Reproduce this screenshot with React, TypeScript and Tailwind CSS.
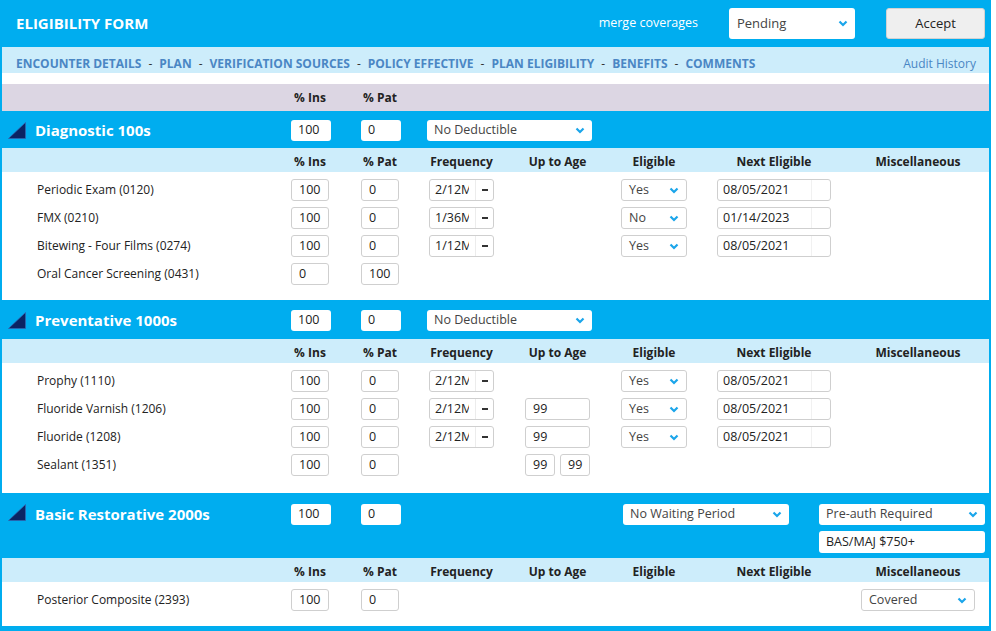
import React from 'react'

type Row = {
  name: string
  ins: string
  pat: string
  freq?: string
  age?: string | [string, string]
  elig?: string
  next?: string
  misc?: string
}

const GRID = 'grid grid-cols-[289px_70px_68px_96px_96px_96px_144px_128px]'

function Chevron() {
  return (
    <svg width="10" height="7" viewBox="0 0 10 7" className="shrink-0">
      <polyline points="1.5,1.5 5,5 8.5,1.5" fill="none" stroke="#1aa5ea" strokeWidth="2.2" />
    </svg>
  )
}

function Triangle() {
  return (
    <svg width="18" height="17" viewBox="0 0 18 17" className="shrink-0">
      <polygon points="17.5,0.5 17.5,16.5 0.5,16.5" fill="#0b2463" stroke="#3463b0" strokeWidth="0.7" />
    </svg>
  )
}

function Select({ value, className = '' }: { value: string; className?: string }) {
  return (
    <div className={`flex items-center justify-between bg-white rounded-[3px] pl-[7px] pr-[7px] text-[#444] ${className}`}>
      <span className="whitespace-nowrap">{value}</span>
      <Chevron />
    </div>
  )
}

function Box({ value, className = '' }: { value: string; className?: string }) {
  return (
    <div className={`flex items-center bg-white rounded-[3px] pl-[7px] text-[#222] ${className}`}>
      {value}
    </div>
  )
}

const bordered = 'border border-[#cfcfcf] text-[12.5px]'

function Section({
  title,
  ins,
  pat,
  rows,
  tall,
  headerH = 'h-[37px]',
  bodyPb = 'pb-[12px]',
}: {
  title: string
  ins: string
  pat: string
  rows: Row[]
  tall?: boolean
  headerH?: string
  bodyPb?: string
}) {
  return (
    <div>
      {/* cabecera de la sección */}
      {tall ? (
        <div className={`${GRID} bg-[#00adef] h-[65px] pt-[11px]`}>
          <div className="flex items-start gap-[9px] pl-[6px] h-[22px]">
            <Triangle />
            <span className="text-white font-bold text-[15px] leading-[20px]">{title}</span>
          </div>
          <div><Box value={ins} className="w-[40px] h-[21px] text-[12.5px]" /></div>
          <div><Box value={pat} className="w-[40px] h-[21px] text-[12.5px]" /></div>
          <div />
          <div />
          <div className="col-span-3 flex flex-col gap-[6px] pr-[4px]">
            <div className="flex justify-between">
              <Select value="No Waiting Period" className="ml-[2px] w-[166px] h-[21px] text-[12.5px]" />
              <Select value="Pre-auth Required" className="w-[166px] h-[21px] text-[12.5px]" />
            </div>
            <Box value="BAS/MAJ $750+" className="self-end w-[166px] h-[22px] text-[12.5px]" />
          </div>
        </div>
      ) : (
        <div className={`${GRID} bg-[#00adef] ${headerH} items-center pt-[2px]`}>
          <div className="flex items-center gap-[9px] pl-[6px]">
            <Triangle />
            <span className="text-white font-bold text-[15px]">{title}</span>
          </div>
          <div><Box value={ins} className="w-[40px] h-[21px] text-[12.5px]" /></div>
          <div><Box value={pat} className="w-[40px] h-[21px] text-[12.5px]" /></div>
          <div className="col-span-3">
            <Select value="No Deductible" className="-ml-[2px] w-[165px] h-[21px] text-[12.5px]" />
          </div>
        </div>
      )}

      {/* encabezados de columnas */}
      <div className={`${GRID} bg-[#cdedfb] h-[24px] pt-[3px] items-center font-bold text-[#222]`}>
        <div />
        <div className="w-[38px] text-center whitespace-nowrap">% Ins</div>
        <div className="w-[38px] text-center whitespace-nowrap">% Pat</div>
        <div className="w-[65px] text-center">Frequency</div>
        <div className="w-[65px] text-center whitespace-nowrap">Up to Age</div>
        <div className="w-[66px] text-center">Eligible</div>
        <div className="w-[114px] text-center whitespace-nowrap">Next Eligible</div>
        <div className="w-[114px] text-center">Miscellaneous</div>
      </div>

      {/* filas */}
      <div className={`bg-white pt-[4px] ${bodyPb}`}>
        {rows.map((r) => (
          <div key={r.name} className={`${GRID} h-[28px] items-center`}>
            <div className="pl-[35px] text-[#222]">{r.name}</div>
            <div><Box value={r.ins} className={`${bordered} w-[38px] h-[22px] pl-[6px]`} /></div>
            <div><Box value={r.pat} className={`${bordered} w-[38px] h-[22px] pl-[6px]`} /></div>
            <div>
              {r.freq && (
                <div className={`${bordered} flex w-[65px] h-[22px] rounded-[3px] bg-white`}>
                  <div className="w-[45px] pl-[5px]">
                    <div className="w-[34px] overflow-hidden whitespace-nowrap leading-[20px] text-[#222]">
                      {r.freq}
                    </div>
                  </div>
                  <div className="flex-1 border-l border-[#ececec] flex items-center justify-center">
                    <span className="block w-[6px] h-[2px] bg-[#333]" />
                  </div>
                </div>
              )}
            </div>
            <div>
              {typeof r.age === 'string' && (
                <Box value={r.age} className={`${bordered} w-[65px] h-[22px] pl-[6px]`} />
              )}
              {Array.isArray(r.age) && (
                <div className="flex gap-[5px]">
                  <Box value={r.age[0]} className={`${bordered} w-[30px] h-[22px] pl-[6px]`} />
                  <Box value={r.age[1]} className={`${bordered} w-[30px] h-[22px] pl-[6px]`} />
                </div>
              )}
            </div>
            <div>
              {r.elig && <Select value={r.elig} className={`${bordered} w-[66px] h-[22px]`} />}
            </div>
            <div>
              {r.next && (
                <div className={`${bordered} flex w-[114px] h-[22px] rounded-[3px] bg-white`}>
                  <div className="w-[93px] pl-[5px] leading-[20px] text-[#222]">{r.next}</div>
                  <div className="flex-1 border-l border-[#f1f1f1]" />
                </div>
              )}
            </div>
            <div>
              {r.misc && <Select value={r.misc} className={`${bordered} w-[114px] h-[22px]`} />}
            </div>
          </div>
        ))}
      </div>
    </div>
  )
}

const diagnostic: Row[] = [
  { name: 'Periodic Exam (0120)', ins: '100', pat: '0', freq: '2/12M', elig: 'Yes', next: '08/05/2021' },
  { name: 'FMX (0210)', ins: '100', pat: '0', freq: '1/36M', elig: 'No', next: '01/14/2023' },
  { name: 'Bitewing - Four Films (0274)', ins: '100', pat: '0', freq: '1/12M', elig: 'Yes', next: '08/05/2021' },
  { name: 'Oral Cancer Screening (0431)', ins: '0', pat: '100' },
]

const preventative: Row[] = [
  { name: 'Prophy (1110)', ins: '100', pat: '0', freq: '2/12M', elig: 'Yes', next: '08/05/2021' },
  { name: 'Fluoride Varnish (1206)', ins: '100', pat: '0', freq: '2/12M', age: '99', elig: 'Yes', next: '08/05/2021' },
  { name: 'Fluoride (1208)', ins: '100', pat: '0', freq: '2/12M', age: '99', elig: 'Yes', next: '08/05/2021' },
  { name: 'Sealant (1351)', ins: '100', pat: '0', age: ['99', '99'] },
]

const basic: Row[] = [{ name: 'Posterior Composite (2393)', ins: '100', pat: '0', misc: 'Covered' }]

const navLinks = [
  'ENCOUNTER DETAILS',
  'PLAN',
  'VERIFICATION SOURCES',
  'POLICY EFFECTIVE',
  'PLAN ELIGIBILITY',
  'BENEFITS',
  'COMMENTS',
]

export default function App() {
  return (
    <div className="w-[991px] h-[631px] overflow-hidden border-x-2 border-[#00adef] bg-white font-['Open_Sans',sans-serif] text-[12px]">
      {/* Encabezado */}
      <div className="h-[47px] bg-[#00adef] flex items-center pl-[14px] pr-[4px]">
        <h1 className="text-white font-bold text-[15px]">ELIGIBILITY FORM</h1>
        <div className="ml-auto flex items-center">
          <span className="text-white text-[12.5px]">merge coverages</span>
          <Select value="Pending" className="ml-[31px] w-[126px] h-[31px] text-[13px] text-[#333] pl-[8px] pr-[6px]" />
          <button className="ml-[31px] w-[99px] h-[31px] rounded-[3px] bg-[#efefef] border border-[#d2d2d2] text-[13px] text-[#222]">
            Accept
          </button>
        </div>
      </div>

      {/* Navegación */}
      <div className="h-[26px] bg-[#cdedfb] flex items-center pt-[7px] pl-[14px] pr-[13px]">
        {navLinks.map((l, i) => (
          <React.Fragment key={l}>
            {i > 0 && <span className="mx-[7px] text-[#333]">-</span>}
            <span className="font-bold text-[#4a86c4]">{l}</span>
          </React.Fragment>
        ))}
        <span className="ml-auto text-[#4a86c4]">Audit History</span>
      </div>

      <div className="h-[11px]" />

      <div className={`${GRID} h-[27px] items-center bg-[#dcd6e3] font-bold text-[#222]`}>
        <div />
        <div className="w-[38px] text-center whitespace-nowrap">% Ins</div>
        <div className="w-[38px] text-center whitespace-nowrap">% Pat</div>
      </div>

      <Section title="Diagnostic 100s" ins="100" pat="0" rows={diagnostic} />
      <Section title="Preventative 1000s" ins="100" pat="0" rows={preventative} headerH="h-[39px]" bodyPb="pb-[14px]" />
      <Section title="Basic Restorative 2000s" ins="100" pat="0" rows={basic} tall />
      <div className="h-[20px] bg-[#00adef]" />
    </div>
  )
}
